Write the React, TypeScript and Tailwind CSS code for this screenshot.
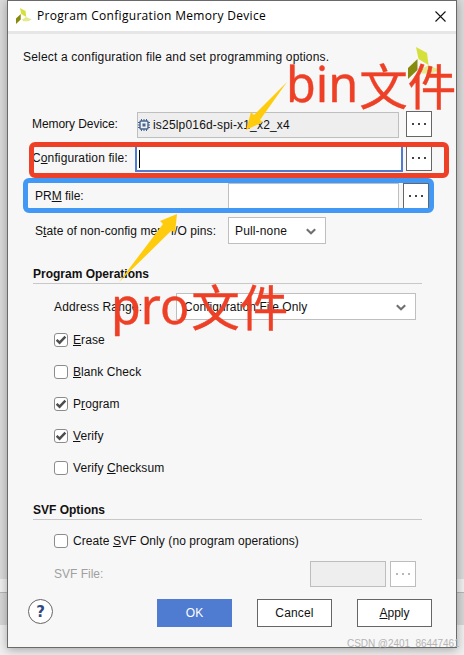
import type { ReactNode } from "react";

interface CheckRowProps {
  checked?: boolean;
  children: ReactNode;
}

function CheckRow({ checked = false, children }: CheckRowProps) {
  return (
    <label className="flex h-8 items-center gap-[5px] pl-[46px]">
      <span className="flex size-[14px] shrink-0 items-center justify-center rounded-[3px] border border-[#8c8c8c] bg-white">
        {checked && (
          <svg width="12" height="12" viewBox="0 0 12 12" fill="none">
            <path d="M1.6 5.8 4.6 8.7 10.4 2.6" stroke="#4d4d4d" strokeWidth="2.4" />
          </svg>
        )}
      </span>
      <span className="tracking-[0.08px]">{children}</span>
    </label>
  );
}

function BrowseButton({ disabled = false }: { disabled?: boolean }) {
  return (
    <button
      disabled={disabled}
      className={
        disabled
          ? "flex size-[26px] shrink-0 items-center justify-center gap-1 border border-[#bdbdbd] bg-white text-[#b8b8b8]"
          : "flex size-[26px] shrink-0 items-center justify-center gap-1 border border-[#666] bg-white text-[#444]"
      }
    >
      <span className="size-[2px] bg-current" />
      <span className="size-[2px] bg-current" />
      <span className="size-[2px] bg-current" />
    </button>
  );
}

function Chevron() {
  return (
    <svg width="10" height="7" viewBox="0 0 10 7" fill="none" className="mt-px shrink-0">
      <path d="M0.8 1.2 5 5.2 9.2 1.2" stroke="#707070" strokeWidth="2.1" />
    </svg>
  );
}

function ChipIcon() {
  return (
    <svg width="12" height="12" viewBox="0 0 12 12" fill="none" className="shrink-0">
      <path
        d="M3.5 0v12M6 0v12M8.5 0v12M0 3.5h12M0 6h12M0 8.5h12"
        stroke="#48648f"
        strokeWidth="1"
      />
      <rect x="2" y="2" width="8" height="8" rx="1" fill="#efefef" stroke="#48648f" strokeWidth="1.4" />
      <rect x="4.5" y="4.5" width="3" height="3" fill="#48648f" />
    </svg>
  );
}

function Logo({ size }: { size: number }) {
  return (
    <svg width={size} height={size} viewBox="0 0 32 32" className="shrink-0">
      <path d="M8 0 19 6 20.5 18 10.5 12Z" fill="#d5e03a" />
      <path d="M0 21 9.5 12V23L0 32Z" fill="#868b0d" />
      <path d="M12 23 20.5 18 31.5 23 24 26.5 14 26.5Z" fill="#e3e98c" />
    </svg>
  );
}

function SectionTitle({ children }: { children: ReactNode }) {
  return (
    <h2 className="ml-[25px] mr-[34px] flex h-5 items-center border-b border-[#c8c8c8] text-[12px] font-bold">
      {children}
    </h2>
  );
}

function Backdrop() {
  return (
    <div className="absolute inset-0 flex flex-col bg-[#efefef]">
      <div className="h-[579px] bg-[#dadada]" />
      <div className="h-[13px] bg-[#efefef]" />
      <div className="h-[33px] border-t border-[#b5b5b5] bg-[#d6d6d6]" />
    </div>
  );
}

// hand-drawn marks that lie over the dialog
function Annotations() {
  return (
    <>
      <div className="absolute left-[29px] top-[142px] h-[36px] w-[420px] rounded-[6px] border-[5px] border-[#ee4026]" />
      <div className="absolute left-[23px] top-[178px] h-[35px] w-[411px] rounded-[6px] border-[5px] border-[#4298f5]" />
      <svg className="absolute inset-0" width="464" height="655" viewBox="0 0 464 655">
        <path d="M287 82 260 120 263 122 246 130 251 112 254 115Z" fill="#ffcc0d" />
        <path d="M119 282 163 224 160 221 177 214 175 233 171.5 230.5Z" fill="#ffcc0d" />
      </svg>
      <div className="absolute left-[286px] top-[55px] flex whitespace-nowrap font-['Noto_Sans','Noto_Sans_CJK_SC',sans-serif] text-[48.5px] leading-[56px] text-[#ee4026] [-webkit-text-stroke:0.4px_#ee4026]">
        <span>bin</span>
        <span className="ml-px pt-[3px]">文件</span>
      </div>
      <div className="absolute left-[111px] top-[277px] flex whitespace-nowrap font-['Noto_Sans','Noto_Sans_CJK_SC',sans-serif] text-[48.5px] leading-[56px] text-[#ee4026] [-webkit-text-stroke:0.4px_#ee4026]">
        <span>pro</span>
        <span className="ml-[2px] pt-[2px]">文件</span>
      </div>
      <div className="absolute left-[347px] top-[637px] whitespace-nowrap text-[10px] leading-[14px] tracking-[-0.05px] text-[#b4b4b4]">
        CSDN @2401_86447461
      </div>
    </>
  );
}

export default function App() {
  return (
    <div className="relative h-[655px] w-[464px] overflow-hidden font-['Liberation_Sans',Arial,sans-serif] text-[12px] leading-4 text-[#111]">
      <Backdrop />

      <div className="relative ml-[7px] flex h-[648px] w-[450px] flex-col border border-[#6a6a6a] bg-[#f7f7f7] shadow-[0_2px_9px_rgba(0,0,0,0.3)]">
        <header className="flex h-[33px] shrink-0 items-center border-b-[3px] border-[#e6e6e6] bg-white pl-2 pr-[10px]">
          <Logo size={16} />
          <h1 className="ml-[5px] flex-1 font-['Open_Sans','Noto_Sans',sans-serif] text-[12px] tracking-[0.31px] text-black">
            Program Configuration Memory Device
          </h1>
          <button>
            <svg width="11" height="11" viewBox="0 0 11 11" stroke="#111" strokeWidth="1.1">
              <path d="M0.5 0.5 10.5 10.5M10.5 0.5 0.5 10.5" />
            </svg>
          </button>
        </header>

        <div className="flex h-[77px] shrink-0 items-start justify-between pl-[15px] pr-4 pt-[13px]">
          <p className="pt-[2px] tracking-[0.18px]">
            Select a configuration file and set programming options.
          </p>
          <Logo size={32} />
        </div>

        <div className="flex h-[27px] shrink-0 items-start pl-6">
          <span className="w-[105px] pt-[5px] tracking-[-0.06px]">Memory Device:</span>
          <div className="mt-px flex h-[26px] w-[262px] items-center gap-[2px] border border-[#bfbfbf] bg-[#eee]">
            <ChipIcon />
            <span className="pl-px tracking-[0.18px]">is25lp016d-spi-x1_x2_x4</span>
          </div>
          <div className="ml-[7px]">
            <BrowseButton />
          </div>
        </div>

        <div className="mt-[7px] flex h-[27px] shrink-0 items-start pl-6">
          <span className="w-[103px] pt-[5px] tracking-[0.12px]">
            C<u>o</u>nfiguration file:
          </span>
          <div className="flex h-[27px] w-[268px] items-center border-2 border-[#4f7bd0] bg-white pl-[2px]">
            <span className="h-[18px] w-px bg-black" />
          </div>
          <div className="ml-[3px]">
            <BrowseButton />
          </div>
        </div>

        <div className="mt-[11px] flex h-[26px] shrink-0 items-center pl-[27px]">
          <span className="w-[193px]">
            PR<u>M</u> file:
          </span>
          <div className="h-[26px] w-[171px] border border-[#bfbfbf] bg-white" />
          <div className="ml-1">
            <BrowseButton />
          </div>
        </div>

        <div className="mt-2 flex h-[27px] shrink-0 items-center pl-[27px]">
          <span className="w-[193px] tracking-[0.07px]">
            S<u>t</u>ate of non-config mem I/O pins:
          </span>
          <div className="flex h-[27px] w-[98px] items-center justify-between border border-[#bfbfbf] bg-white pl-[6px] pr-[9px]">
            <span className="tracking-[0.15px]">Pull-none</span>
            <Chevron />
          </div>
        </div>

        <div className="mt-5 shrink-0">
          <SectionTitle>Program Operations</SectionTitle>
          <div className="mt-[9px] flex h-[27px] items-center pl-[46px]">
            <span className="w-[122px] tracking-[0.15px]">
              Address Ran<u>g</u>e:
            </span>
            <div className="flex h-[27px] w-[240px] items-center justify-between border border-[#bfbfbf] bg-white pl-[7px] pr-[9px]">
              <span className="tracking-[0.05px]">Configuration File Only</span>
              <Chevron />
            </div>
          </div>
        </div>

        <div className="mt-1 shrink-0">
          <CheckRow checked>
            <u>E</u>rase
          </CheckRow>
          <CheckRow>
            <u>B</u>lank Check
          </CheckRow>
          <CheckRow checked>
            P<u>r</u>ogram
          </CheckRow>
          <CheckRow checked>
            <u>V</u>erify
          </CheckRow>
          <CheckRow>
            Verify <u>C</u>hecksum
          </CheckRow>
        </div>

        <div className="mt-4 shrink-0">
          <SectionTitle>SVF Options</SectionTitle>
          <div className="mt-[5px]">
            <CheckRow>
              Create <u>S</u>VF Only (no program operations)
            </CheckRow>
          </div>
          <div className="mt-1 flex h-[26px] items-center pl-[46px]">
            <span className="w-[256px] text-[#a0a0a0]">SVF File:</span>
            <div className="h-[26px] w-[76px] border border-[#bdbdbd] bg-[#eee]" />
            <div className="ml-1">
              <BrowseButton disabled />
            </div>
          </div>
        </div>

        <footer className="mt-3 flex shrink-0 items-start pl-5">
          <button className="flex size-[25px] items-center justify-center rounded-full border border-[#666] bg-white font-['DejaVu_Sans',sans-serif] text-[15px] font-bold text-[#314b82]">
            ?
          </button>
          <div className="ml-[104px] flex gap-[25px]">
            <button className="h-7 w-[75px] bg-[#4f7bd0] text-white">OK</button>
            <button className="h-7 w-[75px] border border-[#666] bg-white tracking-[0.15px]">Cancel</button>
            <button className="h-7 w-[75px] border border-[#666] bg-white">
              <u>A</u>pply
            </button>
          </div>
        </footer>
      </div>

      <Annotations />
    </div>
  );
}
